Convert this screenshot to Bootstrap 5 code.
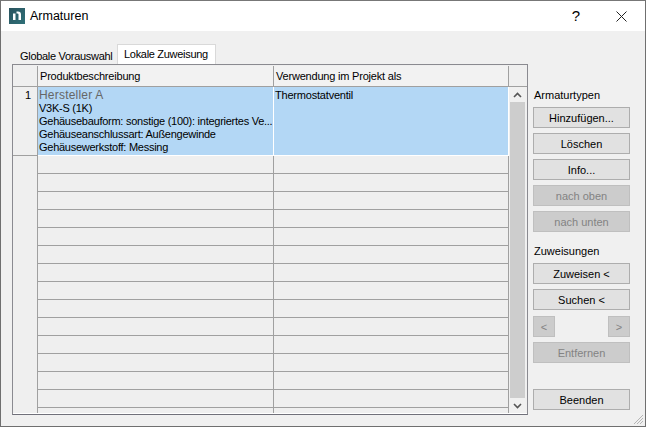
<!DOCTYPE html>
<html lang="de">
<head>
    <meta charset="UTF-8">
    <title>Armaturen</title>
    <link href="https://cdn.jsdelivr.net/npm/bootstrap@5.3.2/dist/css/bootstrap.min.css" rel="stylesheet">
    <style>
        html, body { height: 100%; }
        body { margin: 0; background: #f0f0f0; font: 11px/16px "Liberation Sans", sans-serif; color: #000; overflow: hidden; }

        .dlg { width: 646px; height: 427px; border: 1px solid #6f6f6f; border-top-color: #777; background: #f0f0f0; }
        .dlg-title { height: 30px; background: #fff; padding-left: 8px; font-size: 12.5px; }
        .app-logo { width: 16px; height: 16px; margin-right: 5px; }
        .dlg-help { width: 12px; margin-left: auto; font-size: 15px; text-align: center; }
        .dlg-close { margin: 0 18px 0 34px; width: 11px; height: 11px; }

        .dlg-main { padding: 13px 15px 0 11px; }
        .left-part { width: 516px; }
        .tab-strip { height: 20px; padding-left: 2px; letter-spacing: -.3px; }
        .tab-a { height: 17px; width: 103px; padding-left: 6px; line-height: 19px; white-space: nowrap; }
        .tab-b { height: 20px; width: 99px; background: #fff; border: 1px solid #d9d9d9; border-bottom: 0; padding-left: 6px; line-height: 19px; white-space: nowrap; }

        .grid-frame { width: 516px; height: 351px; border: 1px solid #8a8a90; border-bottom-color: #70707a; box-shadow: inset 0 -1px 0 #fff; background: #efefef; padding: 1px 0; letter-spacing: -.2px; }
        .head-row { height: 21px; border-bottom: 1px solid #a0a0a0; }
        .head-num { width: 25px; border-right: 1px solid #a0a0a0; }
        .head-a { width: 236px; border-right: 1px solid #a0a0a0; padding: 2px 0 0 2px; background: #f2f2f2; }
        .head-b { width: 235px; border-right: 1px solid #a0a0a0; padding: 2px 0 0 2px; background: #f2f2f2; }

        .grid-body { height: 327px; }
        .grid-rows { width: 496px; height: 326px; overflow: hidden; }
        .data-row { height: 18px; flex: none; }
        .data-row.first { height: 69px; }
        .num-cell { width: 25px; flex: none; border-right: 1px solid #a0a0a0; text-align: right; padding-right: 6px; }
        .first .num-cell { border-bottom: 1px solid #a0a0a0; }
        .cell-a { width: 236px; flex: none; border-right: 1px solid #a0a0a0; border-bottom: 1px solid #a0a0a0; }
        .cell-b { width: 235px; flex: none; border-right: 1px solid #a0a0a0; border-bottom: 1px solid #a0a0a0; }
        .first .cell-a, .first .cell-b { background: #b3d7f5; border-bottom-color: #fff; border-right-color: #fff; padding: 2px 0 0 1px; line-height: 13px; }
        .first .cell-a { white-space: nowrap; overflow: hidden; letter-spacing: -.26px; }
        .maker { color: #666; font-size: 12px; letter-spacing: .2px; }

        .scroll-col { width: 17px; height: 326px; background: #f0f0f0; }
        .scroll-btn { height: 15px; flex: none; }
        .scroll-thumb { flex: 1; background: #cdcdcd; margin: 0 1px; }

        .side-part { width: 97px; margin-left: 5px; padding-top: 46px; height: 371px; }
        .side-lbl { height: 17px; line-height: 11px; padding-left: 1px; white-space: nowrap; }
        .win-btn { display: block; flex: none; width: 97px; height: 21px; padding: 0; border: 1px solid #adadad; border-radius: 0; background: #e1e1e1; color: #000; font: inherit; line-height: 18px; text-align: center; margin-bottom: 5px; }
        .win-btn:disabled { background: #ccc; border-color: #bfbfbf; color: #838383; opacity: 1; }
        .win-btn.tiny { width: 22px; margin: 0; }
        .tiny-pair { margin: 1px 0 5px; }
        .lbl-two { margin-top: 9px; }
        .grip { position: absolute; right: 1px; bottom: 1px; width: 12px; height: 12px; }
    </style>
</head>
<body>
<div class="dlg position-relative d-flex flex-column">
    <div class="dlg-title d-flex align-items-center">
        <svg class="app-logo" viewBox="0 0 16 16"><defs><linearGradient id="lg" x1="0" y1="0" x2="1" y2="1"><stop offset="0" stop-color="#2a535e"/><stop offset="1" stop-color="#2f7078"/></linearGradient></defs><rect width="16" height="16" fill="url(#lg)"/><path d="M4 5.5h2.5V12H4zM7.5 3.5h1.5a3 3 0 0 1 3 3V12H9.5V6.5a1 1 0 0 0-1-1h-1z" fill="#fff"/></svg>
        <span>Armaturen</span>
        <span class="dlg-help">?</span>
        <svg class="dlg-close" viewBox="0 0 11 11"><path d="M.5.5l10 10M10.5.5l-10 10" stroke="#222" stroke-width="1" fill="none"/></svg>
    </div>
    <div class="dlg-main d-flex">
        <div class="left-part">
            <div class="tab-strip d-flex align-items-end">
                <div class="tab-a">Globale Vorauswahl</div>
                <div class="tab-b">Lokale Zuweisung</div>
            </div>
            <div class="grid-frame">
                <div class="head-row d-flex">
                    <div class="head-num"></div>
                    <div class="head-a">Produktbeschreibung</div>
                    <div class="head-b">Verwendung im Projekt als</div>
                </div>
                <div class="grid-body d-flex">
                    <div class="grid-rows d-flex flex-column" id="rows">
                        <div class="data-row first d-flex">
                            <div class="num-cell">1</div>
                            <div class="cell-a">
                                <div class="maker">Hersteller A</div>
                                <div>V3K-S (1K)</div>
                                <div>Gehäusebauform: sonstige (100): integriertes Ve...</div>
                                <div>Gehäuseanschlussart: Außengewinde</div>
                                <div>Gehäusewerkstoff: Messing</div>
                            </div>
                            <div class="cell-b">Thermostatventil</div>
                        </div>
                    </div>
                    <div class="scroll-col d-flex flex-column">
                        <div class="scroll-btn d-flex align-items-center justify-content-center"><svg width="9" height="6" viewBox="0 0 9 6"><path d="M1 5l3.5-3.5L8 5" stroke="#555" stroke-width="1.6" fill="none"/></svg></div>
                        <div class="scroll-thumb"></div>
                        <div class="scroll-btn d-flex align-items-center justify-content-center"><svg width="9" height="6" viewBox="0 0 9 6"><path d="M1 1l3.5 3.5L8 1" stroke="#555" stroke-width="1.6" fill="none"/></svg></div>
                    </div>
                </div>
            </div>
        </div>
        <div class="side-part d-flex flex-column">
            <div class="side-lbl">Armaturtypen</div>
            <button class="win-btn">Hinzufügen...</button>
            <button class="win-btn">Löschen</button>
            <button class="win-btn">Info...</button>
            <button class="win-btn" disabled>nach oben</button>
            <button class="win-btn" disabled>nach unten</button>
            <div class="side-lbl lbl-two">Zuweisungen</div>
            <button class="win-btn">Zuweisen &lt;</button>
            <button class="win-btn">Suchen &lt;</button>
            <div class="tiny-pair d-flex justify-content-between">
                <button class="win-btn tiny" disabled>&lt;</button>
                <button class="win-btn tiny" disabled>&gt;</button>
            </div>
            <button class="win-btn" disabled>Entfernen</button>
            <button class="win-btn mt-auto">Beenden</button>
        </div>
    </div>
    <svg class="grip" viewBox="0 0 12 12"><path d="M11 2L2 11M11 5L5 11M11 8L8 11" stroke="#b5b5b5" stroke-width="1" fill="none"/></svg>
</div>
<script>
    // empty rows below the selected one
    var rows = document.getElementById('rows');
    for (var i = 0; i < 15; i++) {
        rows.insertAdjacentHTML('beforeend', '<div class="data-row d-flex"><div class="num-cell"></div><div class="cell-a"></div><div class="cell-b"></div></div>');
    }
</script>
<script src="https://cdn.jsdelivr.net/npm/bootstrap@5.3.2/dist/js/bootstrap.bundle.min.js"></script>
</body>
</html>
